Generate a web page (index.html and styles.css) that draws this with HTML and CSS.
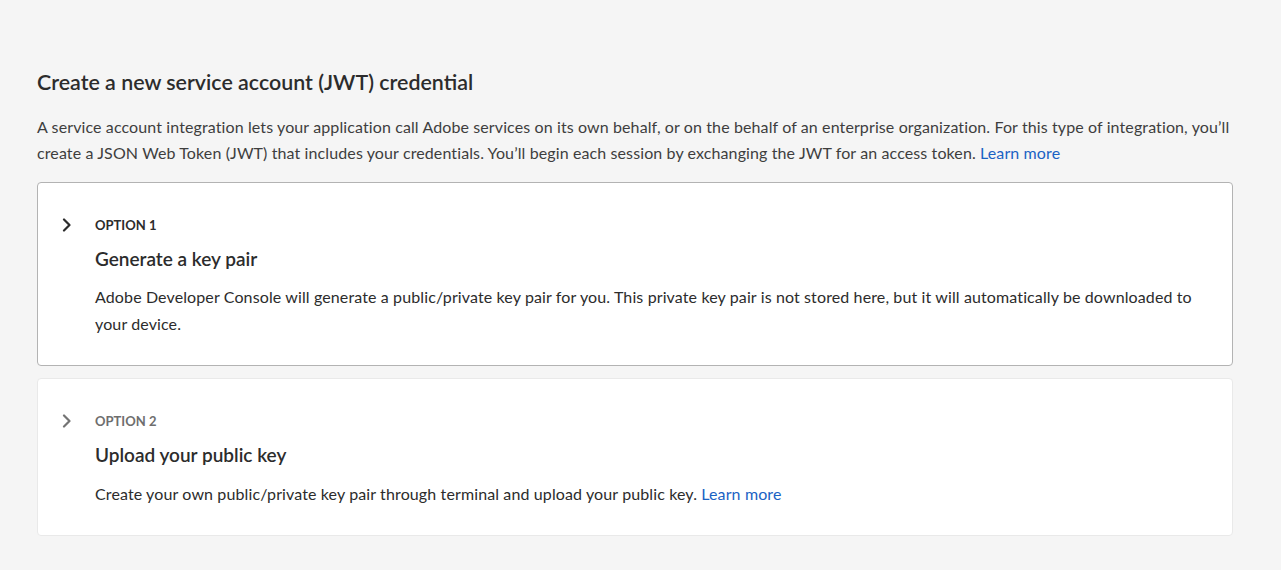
FILE: index.html
```html
<!DOCTYPE html>
<html lang="en">
<head>
<meta charset="utf-8">
<title>Create a new service account (JWT) credential</title>
<link rel="stylesheet" href="styles.css">
</head>
<body>
<main class="page">
  <h1 class="title">Create a new service account (JWT) credential</h1>
  <p class="intro">A service account integration lets your application call Adobe services on its own behalf, or on the behalf of an enterprise organization. For this type of integration, you’ll create a JSON Web Token (JWT) that includes your credentials. You’ll begin each session by exchanging the JWT for an access token. <a class="link" href="#">Learn more</a></p>
  <div class="options">
    <section class="card card-active">
      <svg class="chevron" viewBox="0 0 10 14" width="10" height="14" aria-hidden="true"><path d="M2 1.5 L7.5 7 L2 12.5" fill="none" stroke="currentColor" stroke-width="2.2" stroke-linecap="round" stroke-linejoin="round"/></svg>
      <div class="card-body">
        <div class="eyebrow">Option 1</div>
        <h2 class="card-title">Generate a key pair</h2>
        <p class="card-text">Adobe Developer Console will generate a public/private key pair for you. This private key pair is not stored here, but it will automatically be downloaded to your device.</p>
      </div>
    </section>
    <section class="card card-idle">
      <svg class="chevron" viewBox="0 0 10 14" width="10" height="14" aria-hidden="true"><path d="M2 1.5 L7.5 7 L2 12.5" fill="none" stroke="currentColor" stroke-width="2.2" stroke-linecap="round" stroke-linejoin="round"/></svg>
      <div class="card-body">
        <div class="eyebrow">Option 2</div>
        <h2 class="card-title">Upload your public key</h2>
        <p class="card-text">Create your own public/private key pair through terminal and upload your public key. <a class="link" href="#">Learn more</a></p>
      </div>
    </section>
  </div>
</main>
</body>
</html>
```

FILE: styles.css
```css
html, body {
  margin: 0;
  padding: 0;
  background: #f5f5f5;
}
body {
  font-family: Lato, "Noto Sans", sans-serif;
  color: #2c2c2c;
}
.page {
  width: 1196px;
  padding: 69px 0 0 37px;
}
.title {
  margin: 0;
  font-size: 21.4px;
  line-height: 26px;
  font-weight: 600;
  color: #2c2c2c;
}
.intro {
  margin: 19px 0 0;
  font-size: 16px;
  line-height: 26px;
  letter-spacing: 0.11px;
  color: #3e3e3e;
}
.link {
  color: #1a62c4;
  text-decoration: none;
}
.options {
  margin-top: 16px;
  display: flex;
  flex-direction: column;
  gap: 12px;
}
.card {
  display: flex;
  gap: 23px;
  background: #fff;
  border-radius: 4px;
  padding: 34px 24px 28px 24px;
}
.card-active {
  border: 1px solid #b3b3b3;
}
.card-idle {
  border: 1px solid #e9e9e9;
}
.chevron {
  flex: none;
  margin-top: 1px;
  color: #2c2c2c;
}
.card-idle .chevron {
  color: #747474;
}
.card-body {
  flex: 1;
}
.eyebrow {
  font-size: 13px;
  line-height: 16px;
  font-weight: 700;
  text-transform: uppercase;
  color: #2c2c2c;
}
.card-idle .eyebrow {
  color: #6e6e6e;
}
.card-title {
  margin: 14px 0 0;
  font-size: 19px;
  line-height: 23px;
  font-weight: 600;
  color: #2c2c2c;
}
.card-text {
  margin: 13px 0 0;
  font-size: 16px;
  line-height: 27px;
  letter-spacing: 0.12px;
  color: #2c2c2c;
}
.card-idle .card-text {
  margin-top: 14px;
}
```
